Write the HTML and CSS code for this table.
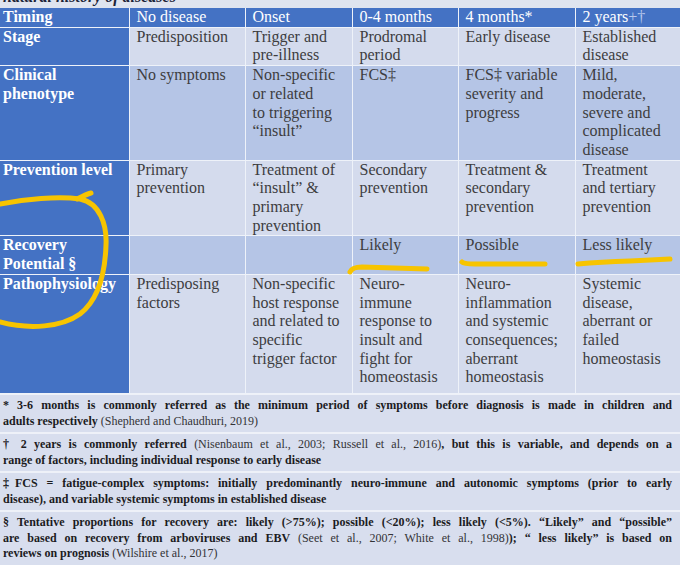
FILE: index.html
```html
<!DOCTYPE html>
<html lang="en">
<head>
<meta charset="utf-8">
<title>Natural history of diseases</title>
<link rel="stylesheet" href="styles.css">
</head>
<body>
<div class="page">
  <div class="title"><span>natural history of diseases</span></div>
  <table class="nh">
    <colgroup>
      <col class="c1"><col class="c2"><col class="c3"><col class="c4"><col class="c5"><col class="c6">
    </colgroup>
    <tr class="hdr">
      <th>Timing</th><td>No disease</td><td>Onset</td><td>0-4 months</td><td>4 months*</td><td>2 years<span class="fade">+†</span></td>
    </tr>
    <tr class="light">
      <th>Stage</th><td>Predisposition</td><td>Trigger and<br>pre-illness</td><td>Prodromal<br>period</td><td>Early disease</td><td>Established<br>disease</td>
    </tr>
    <tr class="mid">
      <th>Clinical<br>phenotype</th><td>No symptoms</td><td>Non-specific<br>or related<br>to triggering<br>“insult”</td><td>FCS‡</td><td>FCS‡ variable<br>severity and<br>progress</td><td>Mild,<br>moderate,<br>severe and<br>complicated<br>disease</td>
    </tr>
    <tr class="light">
      <th>Prevention level</th><td>Primary<br>prevention</td><td>Treatment of<br>“insult” &amp;<br>primary<br>prevention</td><td>Secondary<br>prevention</td><td>Treatment &amp;<br>secondary<br>prevention</td><td>Treatment<br>and tertiary<br>prevention</td>
    </tr>
    <tr class="mid">
      <th>Recovery<br>Potential §</th><td></td><td></td><td>Likely</td><td>Possible</td><td>Less likely</td>
    </tr>
    <tr class="light tall">
      <th>Pathophysiology</th><td>Predisposing<br>factors</td><td>Non-specific<br>host response<br>and related to<br>specific<br>trigger factor</td><td>Neuro-<br>immune<br>response to<br>insult and<br>fight for<br>homeostasis</td><td>Neuro-<br>inflammation<br>and systemic<br>consequences;<br>aberrant<br>homeostasis</td><td>Systemic<br>disease,<br>aberrant or<br>failed<br>homeostasis</td>
    </tr>
  </table>
  <div class="notes">
    <p class="note">
      <span class="ln"><b>* 3-6 months is commonly referred as the minimum period of symptoms before diagnosis is made in children and</b></span>
      <span class="ln last"><b>adults respectively</b> <span class="cite">(Shepherd and Chaudhuri, 2019)</span></span>
    </p>
    <p class="note">
      <span class="ln"><b>† 2 years is commonly referred</b> <span class="cite">(Nisenbaum et al., 2003; Russell et al., 2016)</span><b>, but this is variable, and depends on a</b></span>
      <span class="ln last"><b>range of factors, including individual response to early disease</b></span>
    </p>
    <p class="note">
      <span class="ln"><b>‡FCS = fatigue-complex symptoms: initially predominantly neuro-immune and autonomic symptoms (prior to early</b></span>
      <span class="ln last"><b>disease), and variable systemic symptoms in established disease</b></span>
    </p>
    <p class="note">
      <span class="ln"><b>§ Tentative proportions for recovery are: likely (&gt;75%); possible (&lt;20%); less likely (&lt;5%). “Likely” and “possible”</b></span>
      <span class="ln"><b>are based on recovery from arboviruses and EBV</b> <span class="cite">(Seet et al., 2007; White et al., 1998)</span><b>); “ less likely” is based on</b></span>
      <span class="ln last"><b>reviews on prognosis</b> <span class="cite">(Wilshire et al., 2017)</span></span>
    </p>
  </div>
  <svg class="ink" width="680" height="578" viewBox="0 0 680 578" aria-hidden="true">
    <path d="M0,204 C25,199 58,196 80,199 C100,203 107,225 106,245 C105,275 98,300 80,314 C62,327 30,330 0,322"/>
    <path d="M77,199 C83,196 87,194 91,193"/>
    <path d="M350,272 Q352,267 362,267 L427,269"/>
    <path d="M462,262 Q464,264 475,264 L545,264"/>
    <path d="M578,264 Q600,262 630,261 L670,259"/>
  </svg>
</div>
</body>
</html>
```
FILE: styles.css
```css
html, body {
  margin: 0;
  padding: 0;
  background: #ffffff;
}

.page {
  position: relative;
  width: 680px;
  font-family: "Liberation Serif", "Times New Roman", serif;
}

.title {
  height: 8px;
  overflow: hidden;
  background: #dfe4ef;
}

.title span {
  display: block;
  margin-top: -13px;
  padding-left: 3px;
  font-size: 16px;
  line-height: 19px;
  font-weight: bold;
  font-style: italic;
  color: #1b2338;
}

.nh {
  width: 680px;
  table-layout: fixed;
  border-collapse: collapse;
  font-size: 16px;
  line-height: 18.7px;
}

.nh .c1 { width: 129px; }
.nh .c2 { width: 116px; }
.nh .c3 { width: 107px; }
.nh .c4 { width: 106px; }
.nh .c5 { width: 117px; }
.nh .c6 { width: 105px; }

.nh th,
.nh td {
  border: 1px solid #eef2f9;
  padding: 0 3px 0 7px;
  vertical-align: top;
  text-align: left;
  color: #3d3d3f;
  font-weight: normal;
}

.nh th {
  background: #4472c4;
  color: #ffffff;
  font-weight: bold;
  padding-left: 3px;
}

.nh tr:first-child th,
.nh tr:first-child td {
  border-top: none;
}

.nh th {
  border-left: none;
}

.nh td:last-child {
  border-right: none;
}

.nh .hdr td {
  background: #4472c4;
  color: #ffffff;
}

.nh .hdr .fade {
  color: #b9c9ec;
}

.nh .light td {
  background: #d4dbed;
}

.nh .mid td {
  background: #b5c5e6;
}

.nh .tall th,
.nh .tall td {
  padding-bottom: 6px;
}

.notes {
  display: flex;
  flex-direction: column;
  gap: 2px;
  padding-top: 1px;
  background: #eef1f8;
}

.note {
  margin: 0;
  padding: 3px 8px 3px 3px;
  background: #d8deee;
  font-size: 12px;
  line-height: 15.5px;
  color: #1c1c1e;
}

.note .ln {
  display: block;
  text-align: justify;
  text-align-last: justify;
}

.note .ln.last {
  text-align-last: left;
}

.note .cite {
  font-weight: normal;
  color: #333336;
}

.ink {
  position: absolute;
  top: 0;
  left: 0;
  pointer-events: none;
  fill: none;
  stroke: #f7c400;
  stroke-width: 5;
  stroke-linecap: round;
  stroke-linejoin: round;
}
```
